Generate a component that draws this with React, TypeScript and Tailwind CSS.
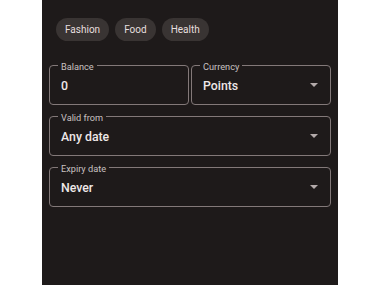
import React from "react";

const Arrow = () => (
  <svg width="8" height="4" viewBox="0 0 8 4" className="shrink-0">
    <path d="M0 0 L8 0 L4 4 Z" fill="#b3aaaa" />
  </svg>
);

function Field({ label, value, select }: { label: string; value: string; select?: boolean }) {
  return (
    <div className="relative h-[40px] rounded-[4px] border border-[#837979] flex items-center pl-[11px] pr-[12px]">
      <span className="absolute left-[8px] top-0 -translate-y-1/2 bg-[#1e1a1a] px-[3px] text-[9.2px] leading-[11px] text-[#c9c1c1]">
        {label}
      </span>
      <span className="flex-1 pt-[2px] text-[12.3px] text-[#eee8e8] font-medium">{value}</span>
      {select && <Arrow />}
    </div>
  );
}

export default function App() {
  return (
    <div className="w-[380px] h-[285px] bg-white" style={{ fontFamily: "Roboto, 'Noto Sans', sans-serif" }}>
      <div className="ml-[42px] w-[296px] h-full bg-[#1e1a1a] pt-[18px]">
        <div className="flex gap-[6px] pl-[14px]">
          {["Fashion", "Food", "Health"].map((c) => (
            <div
              key={c}
              className="h-[23px] rounded-full bg-[#393433] px-[9px] flex items-center text-[10px] text-[#e6dfdf]"
            >
              {c}
            </div>
          ))}
        </div>
        <div className="px-[7px] mt-[24px] flex flex-col gap-[11px]">
          <div className="grid grid-cols-2 gap-[2px]">
            <Field label="Balance" value="0" />
            <Field label="Currency" value="Points" select />
          </div>
          <Field label="Valid from" value="Any date" select />
          <Field label="Expiry date" value="Never" select />
        </div>
      </div>
    </div>
  );
}
